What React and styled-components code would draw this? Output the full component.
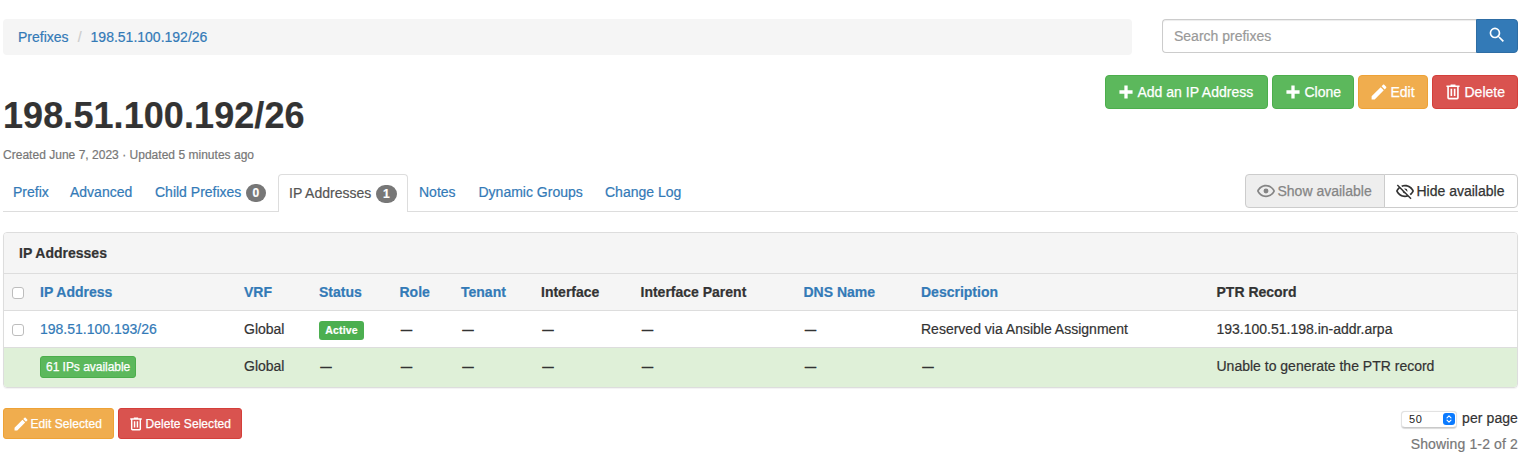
import React from "react";
import styled, { createGlobalStyle, css } from "styled-components";

const GlobalStyle = createGlobalStyle`
  *, *::before, *::after { box-sizing: border-box; }
  body {
    margin: 0;
    background: #fff;
    color: #333;
    font: 14px/20px Helvetica, "Liberation Sans", Arial, sans-serif;
    -webkit-text-stroke: 0.2px;
  }
  button, input { font: inherit; }
`;

const ICONS = {
  magnify:
    "M9.5,3A6.5,6.5 0 0,1 16,9.5C16,11.11 15.41,12.59 14.44,13.73L14.71,14H15.5L20.5,19L19,20.5L14,15.5V14.71L13.73,14.44C12.59,15.41 11.11,16 9.5,16A6.5,6.5 0 0,1 3,9.5A6.5,6.5 0 0,1 9.5,3M9.5,5C7,5 5,7 5,9.5C5,12 7,14 9.5,14C12,14 14,12 14,9.5C14,7 12,5 9.5,5Z",
  plus: "M20 14H14V20H10V14H4V10H10V4H14V10H20V14Z",
  pencil:
    "M20.71,7.04C21.1,6.65 21.1,6 20.71,5.63L18.37,3.29C18,2.9 17.35,2.9 16.96,3.29L15.12,5.12L18.87,8.87M3,17.25V21H6.75L17.81,9.93L14.06,6.18L3,17.25Z",
  trash:
    "M9,3V4H4V6H5V19A2,2 0 0,0 7,21H17A2,2 0 0,0 19,19V6H20V4H15V3H9M7,6H17V19H7V6M9,8V17H11V8H9M13,8V17H15V8H13Z",
  eye: "M12,9A3,3 0 0,1 15,12A3,3 0 0,1 12,15A3,3 0 0,1 9,12A3,3 0 0,1 12,9M12,4.5C17,4.5 21.27,7.61 23,12C21.27,16.39 17,19.5 12,19.5C7,19.5 2.73,16.39 1,12C2.73,7.61 7,4.5 12,4.5M3.18,12C4.83,15.36 8.24,17.5 12,17.5C15.76,17.5 19.17,15.36 20.82,12C19.17,8.64 15.76,6.5 12,6.5C8.24,6.5 4.83,8.64 3.18,12Z",
  eyeOff:
    "M2,5.27L3.28,4L20,20.72L18.73,22L15.65,18.92C14.5,19.3 13.28,19.5 12,19.5C7,19.5 2.73,16.39 1,12C1.69,10.24 2.79,8.69 4.19,7.46L2,5.27M12,9A3,3 0 0,1 15,12C15,12.35 14.94,12.69 14.83,13L11,9.17C11.31,9.06 11.65,9 12,9M12,4.5C17,4.5 21.27,7.61 23,12C22.18,14.08 20.79,15.88 19,17.19L17.58,15.76C18.94,14.82 20.06,13.54 20.82,12C19.17,8.64 15.76,6.5 12,6.5C10.91,6.5 9.84,6.68 8.84,7L7.3,5.47C8.74,4.85 10.33,4.5 12,4.5M3.18,12C4.83,15.36 8.24,17.5 12,17.5C12.69,17.5 13.37,17.43 14,17.29L11.72,15C10.29,14.85 9.15,13.71 9,12.28L5.6,8.87C4.61,9.72 3.78,10.78 3.18,12Z",
};

const IconSvg = styled.svg`
  flex: none;
  width: ${(p) => p.$size}px;
  height: ${(p) => p.$size}px;
  fill: currentColor;
  overflow: visible;
`;

function Icon({ name, size = 16 }) {
  return (
    <IconSvg $size={size} viewBox="2.25 2.25 19.5 19.5" aria-hidden="true">
      <path d={ICONS[name]} />
    </IconSvg>
  );
}

const Page = styled.div`
  padding: 19px 12px 0 3px;
`;

const TopRow = styled.div`
  display: grid;
  grid-template-columns: 1129px 356px;
  justify-content: space-between;
  align-items: start;
`;

const Breadcrumb = styled.nav`
  display: flex;
  height: 36px;
  padding: 8px 15px;
  border-radius: 4px;
  background: #f5f5f5;
`;

const Link = styled.a`
  color: #337ab7;
  text-decoration: none;
`;

const Slash = styled.span`
  width: 22px;
  text-align: center;
  color: #ccc;
`;

const Search = styled.form`
  display: flex;
  height: 34px;
`;

const SearchInput = styled.input`
  flex: 1;
  min-width: 0;
  padding: 6px 12px 7px 11px;
  border: 1px solid #ccc;
  border-right: 0;
  border-radius: 4px 0 0 4px;
  outline: 0;
  box-shadow: inset 0 1px 1px rgba(0, 0, 0, 0.075);
  color: #555;
  &::placeholder { color: #999; opacity: 1; }
`;

const tones = {
  primary: css`background: #337ab7; border-color: #2e6da4; color: #fff;`,
  success: css`background: #5cb85c; border-color: #4cae4c; color: #fff;`,
  warning: css`background: #f0ad4e; border-color: #eea236; color: #fff;`,
  danger: css`background: #d9534f; border-color: #d43f3a; color: #fff;`,
  plain: css`background: #fff; border-color: #ccc; color: #333;`,
  muted: css`background: #eee; border-color: #ccc; color: #858585;`,
};

const sizes = {
  md: css`height: 34px; padding: 0 12px 0 11.5px; gap: 4px; font-size: 14px; border-radius: 4px;`,
  sm: css`height: 31px; padding: 0 10px 0 9.5px; gap: 3px; font-size: 12px; letter-spacing: 0.05px; border-radius: 3px;`,
  xs: css`height: 22px; padding: 0 5px; font-size: 12px; border-radius: 3px;`,
};

const Button = styled.button`
  display: inline-flex;
  align-items: center;
  justify-content: flex-start;
  border: 1px solid;
  line-height: 1;
  white-space: nowrap;
  ${(p) => sizes[p.$size || "md"]}
  ${(p) => tones[p.$tone]}
  ${(p) => p.$w && css`width: ${p.$w}px;`}
  -webkit-text-stroke: 0.25px;
`;

const SearchButton = styled(Button)`
  width: 42px;
  padding-left: 12px;
  padding-bottom: 2px;
  border-radius: 0 4px 4px 0;
`;

const TitleRow = styled.header`
  display: flex;
  justify-content: space-between;
  height: 119px;
`;

const Heading = styled.div`
  padding-top: 41px;
`;

const Title = styled.h1`
  margin: 0;
  font-size: 36px;
  line-height: 40px;
  font-weight: 700;
  letter-spacing: 0.08px;
`;

const Meta = styled.p`
  margin: 9px 0 0;
  font-size: 12px;
  letter-spacing: 0.02px;
  color: #777;
`;

const Actions = styled.div`
  display: flex;
  align-items: flex-start;
  gap: 4px;
  padding-top: ${(p) => p.$top || 0}px;
`;

const TabBar = styled.div`
  display: flex;
  justify-content: space-between;
  height: 38px;
  border-bottom: 1px solid #ddd;
`;

const Tabs = styled.div`
  display: flex;
  margin-left: -1px;
`;

const Tab = styled.a`
  display: flex;
  align-items: center;
  gap: 4.5px;
  width: ${(p) => p.$w}px;
  height: 38px;
  padding: 0 0 ${(p) => (p.$active ? 2 : 4)}px 10px;
  border: 1px solid ${(p) => (p.$active ? "#ddd" : "transparent")};
  border-bottom: 0;
  border-radius: 4px 4px 0 0;
  background: ${(p) => (p.$active ? "#fff" : "none")};
  color: ${(p) => (p.$active ? "#555" : "#337ab7")};
  text-decoration: none;
  white-space: nowrap;
`;

const CountBadge = styled.span`
  min-width: ${(p) => p.$w || 20}px;
  margin-top: 2px;
  padding: 3px 6.5px;
  border-radius: 10px;
  background: #777;
  color: #fff;
  font-size: 12px;
  font-weight: 700;
  line-height: 12px;
  text-align: center;
`;

const ToggleGroup = styled.div`
  display: flex;
  & > :first-child { border-radius: 4px 0 0 4px; }
  & > :last-child { border-radius: 0 4px 4px 0; margin-left: -1px; }
`;

const Panel = styled.section`
  margin-top: 20px;
  border: 1px solid #ddd;
  border-radius: 4px;
  box-shadow: 0 1px 1px rgba(0, 0, 0, 0.05);
  overflow: hidden;
`;

const PanelHeading = styled.div`
  height: 40px;
  padding: 10px 15px;
  background: #f5f5f5;
  font-weight: 700;
`;

const Table = styled.table`
  width: 100%;
  table-layout: fixed;
  border-collapse: separate;
  border-spacing: 0;
`;

const Col = styled.col`
  width: ${(p) => (p.$w ? `${p.$w}px` : "auto")};
`;

const Row = styled.tr`
  height: ${(p) => p.$h || 37}px;
  background: ${(p) => p.$bg || "#fff"};
`;

const cell = css`
  padding: 0 8px;
  border-top: 1px solid #ddd;
  text-align: left;
  vertical-align: middle;
  white-space: nowrap;
`;

const HeadCell = styled.th`
  ${cell}
  color: ${(p) => (p.$sortable ? "#337ab7" : "#333")};
`;

const Cell = styled.td`
  ${cell}
  padding-bottom: ${(p) => p.$lift || 0}px;
`;

const Checkbox = styled.input.attrs({ type: "checkbox" })`
  appearance: none;
  display: block;
  width: 12px;
  height: 12px;
  margin: 2px 0 0;
  border: 1px solid #bdbdbd;
  border-radius: 3px;
  background: #fff;
`;

const Dash = styled.span`
  display: block;
  margin-left: 1.5px;
  font-size: 11px;
  -webkit-text-stroke: 0.6px;
`;

const StatusLabel = styled.span`
  display: block;
  width: 45px;
  height: 19px;
  margin-top: 2px;
  border-radius: 3px;
  background: #4caf50;
  color: #fff;
  font-size: 10.5px;
  font-weight: 700;
  letter-spacing: 0.15px;
  line-height: 19px;
  text-align: center;
`;

const AvailableButton = styled(Button)`
  margin-top: 2px;
  letter-spacing: -0.03px;
  vertical-align: middle;
`;

const Footer = styled.footer`
  display: flex;
  justify-content: space-between;
  padding-top: 20px;
`;

const Paging = styled.div`
  display: flex;
  flex-direction: column;
  align-items: flex-end;
  gap: 6px;
`;

const PerPage = styled.div`
  display: flex;
  align-items: center;
  gap: 5px;
  letter-spacing: 0.08px;
`;

const Select = styled.button`
  display: flex;
  align-items: center;
  justify-content: space-between;
  width: 56px;
  height: 17px;
  margin-top: 2px;
  padding: 0 1px 0 7px;
  border: 1px solid #e2e2e2;
  border-bottom-color: #c9c9c9;
  border-radius: 4px;
  background: #fff;
  box-shadow: 0 0.5px 1px rgba(0, 0, 0, 0.15);
  color: #222;
  font-size: 11px;
  letter-spacing: 0.5px;
  line-height: 1;
  -webkit-text-stroke: 0;
`;

const Stepper = styled.svg`
  width: 12px;
  height: 12px;
`;

const Muted = styled.span`
  color: #777;
  letter-spacing: 0.14px;
`;

const COLUMNS = [
  { label: "IP Address", w: 204, sortable: true },
  { label: "VRF", w: 75, sortable: true },
  { label: "Status", w: 80.5, sortable: true },
  { label: "Role", w: 61.5, sortable: true },
  { label: "Tenant", w: 80, sortable: true },
  { label: "Interface", w: 99.5 },
  { label: "Interface Parent", w: 163 },
  { label: "DNS Name", w: 117.5, sortable: true },
  { label: "Description", w: 295.5, sortable: true },
  { label: "PTR Record" },
];

const ROWS = [
  {
    id: "assigned",
    cells: [
      <Link href="#ip">198.51.100.193/26</Link>,
      "Global",
      <StatusLabel>Active</StatusLabel>,
      null,
      null,
      null,
      null,
      null,
      "Reserved via Ansible Assignment",
      "193.100.51.198.in-addr.arpa",
    ],
  },
  {
    id: "available",
    available: true,
    cells: [
      <AvailableButton $tone="success" $size="xs" $w={96}>61 IPs available</AvailableButton>,
      "Global",
      null,
      null,
      null,
      null,
      null,
      null,
      null,
      "Unable to generate the PTR record",
    ],
  },
];

export default function App() {
  return (
    <Page>
      <GlobalStyle />
      <TopRow>
        <Breadcrumb>
          <Link href="#prefixes">Prefixes</Link>
          <Slash>/</Slash>
          <Link href="#prefix">198.51.100.192/26</Link>
        </Breadcrumb>
        <Search>
          <SearchInput placeholder="Search prefixes" />
          <SearchButton type="button" $tone="primary" aria-label="Search">
            <Icon name="magnify" />
          </SearchButton>
        </Search>
      </TopRow>

      <TitleRow>
        <Heading>
          <Title>198.51.100.192/26</Title>
          <Meta>Created June 7, 2023 · Updated 5 minutes ago</Meta>
        </Heading>
        <Actions $top={20}>
          <Button $tone="success" $w={163}><Icon name="plus" />Add an IP Address</Button>
          <Button $tone="success" $w={82}><Icon name="plus" />Clone</Button>
          <Button $tone="warning" $w={70}><Icon name="pencil" />Edit</Button>
          <Button $tone="danger" $w={86}><Icon name="trash" />Delete</Button>
        </Actions>
      </TitleRow>

      <TabBar>
        <Tabs>
          <Tab $w={57}>Prefix</Tab>
          <Tab $w={85}>Advanced</Tab>
          <Tab $w={134}>Child Prefixes <CountBadge>0</CountBadge></Tab>
          <Tab $w={130} $active>IP Addresses <CountBadge $w={21}>1</CountBadge></Tab>
          <Tab $w={59.5}>Notes</Tab>
          <Tab $w={126.5}>Dynamic Groups</Tab>
          <Tab $w={99}>Change Log</Tab>
        </Tabs>
        <ToggleGroup>
          <Button $tone="muted" $w={140}><Icon name="eye" />Show available</Button>
          <Button $tone="plain" $w={134}><Icon name="eyeOff" />Hide available</Button>
        </ToggleGroup>
      </TabBar>

      <Panel>
        <PanelHeading>IP Addresses</PanelHeading>
        <Table>
          <colgroup>
            <Col $w={28} />
            {COLUMNS.map((c) => <Col key={c.label} $w={c.w} />)}
          </colgroup>
          <thead>
            <Row $bg="#f5f5f5">
              <HeadCell><Checkbox aria-label="Select all" /></HeadCell>
              {COLUMNS.map((c) => (
                <HeadCell key={c.label} $sortable={c.sortable}>{c.label}</HeadCell>
              ))}
            </Row>
          </thead>
          <tbody>
            {ROWS.map((r) => (
              <Row key={r.id} $h={r.available ? 40 : 37} $bg={r.available && "#dff0d8"}>
                <Cell>{!r.available && <Checkbox aria-label="Select row" />}</Cell>
                {r.cells.map((content, i) => (
                  <Cell key={i} $lift={r.available ? 3 : 0}>
                    {content ?? <Dash>—</Dash>}
                  </Cell>
                ))}
              </Row>
            ))}
          </tbody>
        </Table>
      </Panel>

      <Footer>
        <Actions>
          <Button $tone="warning" $size="sm" $w={111}><Icon name="pencil" size={14} />Edit Selected</Button>
          <Button $tone="danger" $size="sm" $w={124}><Icon name="trash" size={14} />Delete Selected</Button>
        </Actions>
        <Paging>
          <PerPage>
            <Select type="button">
              50
              <Stepper viewBox="0 0 12 12">
                <rect width="12" height="12" rx="3" fill="#0a7aff" />
                <path d="M4 4.8 6 2.8 8 4.8M4 7.2 6 9.2 8 7.2" fill="none" stroke="#fff" strokeWidth="1.1" strokeLinecap="round" strokeLinejoin="round" />
              </Stepper>
            </Select>
            per page
          </PerPage>
          <Muted>Showing 1-2 of 2</Muted>
        </Paging>
      </Footer>
    </Page>
  );
}
